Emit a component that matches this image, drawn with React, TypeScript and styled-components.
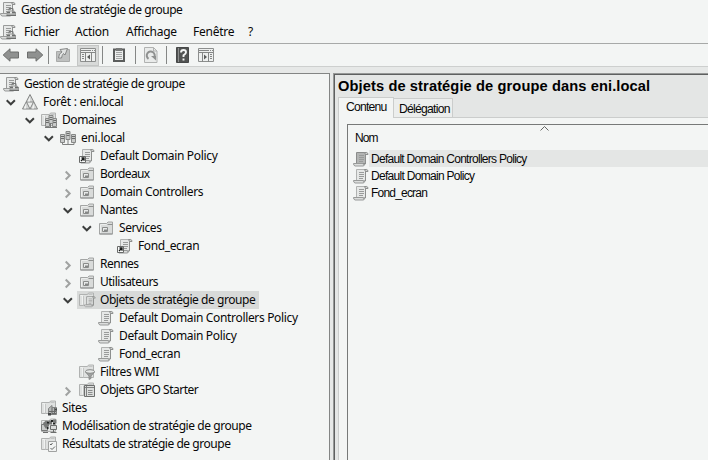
import React from "react";
import styled, { createGlobalStyle } from "styled-components";

const Global = createGlobalStyle`
  * { box-sizing: border-box; }
  body { margin: 0; overflow: hidden; background: #f3f5f4; }
`;

const Window = styled.div`
  width: 708px;
  height: 460px;
  display: flex;
  flex-direction: column;
  background: #f3f5f4;
  color: #080808;
  font: 12px "Noto Sans", sans-serif;
  overflow: hidden;
`;
const TitleBar = styled.header`
  height: 20px;
  display: flex;
  align-items: center;
  gap: 5px;
  svg { margin-top: -2px; }
`;
const MenuBar = styled.nav`
  height: 23px;
  display: flex;
  align-items: center;
  svg { margin-right: 8px; }
`;
const MenuItem = styled.span<{ $width: number }>`
  width: ${(p) => p.$width}px;
  white-space: nowrap;
  letter-spacing: -0.25px;
`;
const Toolbar = styled.div`
  height: 24px;
  flex: none;
  display: flex;
  align-items: center;
  border-top: 1px solid #a7a9a8;
  border-bottom: 1px solid #cdcfce;
`;
const ToolButton = styled.span<{ $width: number; $active?: boolean }>`
  width: ${(p) => p.$width}px;
  height: 21px;
  flex: none;
  display: flex;
  align-items: center;
  justify-content: center;
  background: ${(p) => (p.$active ? "#d8dad9" : "transparent")};
  border: ${(p) => (p.$active ? "1px solid #c4c6c5" : "0")};
  margin-right: ${(p) => (p.$active ? 3 : 0)}px;
  svg { flex: none; }
`;
const Separator = styled.span`
  width: 1px;
  height: 18px;
  background: #858786;
`;
const Body = styled.main`
  flex: 1;
  min-height: 0;
  display: flex;
  padding-top: 6px;
  gap: 3px;
  background: #e6e8e7;
`;
const TreePane = styled.section`
  width: 330px;
  flex: none;
  padding-top: 1px;
  border-top: 1px solid #838584;
  border-right: 1px solid #838584;
  background: #f3f5f4;
`;
const TreeRow = styled.div<{ $depth: number }>`
  height: 18px;
  padding-left: ${(p) => (p.$depth ? p.$depth * 19 - 16 : 3)}px;
  display: flex;
  align-items: center;
`;
const ChevronBox = styled.span`
  width: 19px;
  height: 18px;
  flex: none;
  svg { display: block; }
`;
const TreeItem = styled.span<{ $selected?: boolean }>`
  height: 18px;
  display: flex;
  align-items: center;
  gap: 5px;
  margin-left: -2px;
  padding: 0 4px 0 2px;
  background: ${(p) => (p.$selected ? "#d8dad9" : "transparent")};
`;
const TreeLabel = styled.span<{ $track: number }>`
  white-space: nowrap;
  line-height: 18px;
  letter-spacing: ${(p) => p.$track}px;
`;
const DetailPane = styled.section`
  flex: 1;
  min-width: 0;
  display: flex;
  flex-direction: column;
  border-top: 1px solid #969897;
  border-left: 1px solid #969897;
  font-family: "Liberation Sans", sans-serif;
`;
const DetailInner = styled.div`
  flex: 1;
  display: flex;
  flex-direction: column;
  padding-left: 3px;
  border-top: 1px solid #5e6060;
  border-left: 1px solid #5e6060;
  background: #e4e6e5;
`;
const Heading = styled.h1`
  margin: 0;
  height: 22px;
  font-size: 14.67px;
  line-height: 22px;
  letter-spacing: 0.1px;
  white-space: nowrap;
  color: #000;
`;
const Tabs = styled.div`
  height: 21px;
  display: flex;
  align-items: flex-end;
  border-bottom: 1px solid #cbcdcc;
`;
const Tab = styled.span<{ $width: number; $active?: boolean }>`
  width: ${(p) => p.$width}px;
  height: ${(p) => (p.$active ? 21 : 19)}px;
  margin-bottom: ${(p) => (p.$active ? -1 : 0)}px;
  padding-left: ${(p) => (p.$active ? 7 : 5)}px;
  border: 1px solid #cbcdcc;
  border-bottom: 0;
  border-left-width: ${(p) => (p.$active ? 1 : 0)}px;
  background: ${(p) => (p.$active ? "#f3f5f4" : "#eceeed")};
  line-height: ${(p) => (p.$active ? 18 : 20)}px;
  letter-spacing: ${(p) => (p.$active ? -0.8 : -0.75)}px;
  font-size: 12.2px;
`;
const TabPage = styled.div`
  flex: 1;
  display: flex;
  padding: 6px 0 0 8px;
  border-left: 1px solid #cbcdcc;
  background: #f3f5f4;
`;
const List = styled.div`
  flex: 1;
  border-top: 1px solid #777978;
  border-left: 1px solid #777978;
`;
const ListHeader = styled.div`
  height: 25px;
  display: flex;
  padding: 0 0 0 7px;
  line-height: 27px;
  letter-spacing: -0.9px;
`;
const NameHeading = styled.span`
  width: 185px;
`;
const ListRow = styled.div`
  height: 17px;
  display: flex;
  align-items: center;
  padding-left: 5px;
`;
const ListLabel = styled.span<{ $track: number; $highlight?: boolean }>`
  flex: 1;
  height: 17px;
  padding-left: 2px;
  line-height: 18px;
  letter-spacing: ${(p) => p.$track}px;
  white-space: nowrap;
  background: ${(p) => (p.$highlight ? "#e4e6e5" : "transparent")};
`;
const Glyph = styled.svg`
  width: 16px;
  height: 16px;
  flex: none;
  overflow: visible;
`;

const Scroll = ({ fill = "#e6e8e7", edge = "#b0b2b1" }: { fill?: string; edge?: string }) => (
  <g>
    <path d="M3.5 1.5h9v11H3.5z" fill={fill} stroke={edge} />
    <path d="M11.5 1.5h2.2q1.3.3 1.3 2h-2.500z" fill="#d0d2d1" stroke="#8d8f8e" />
    <path d="M12.500 3.500V13" stroke="#8d8f8e" />
    <path d="M.5 12.500h9.500q0 2 2 1-1 1.500-2 1.500H2q-1.500-.5-1.500-2.500z" fill="#dcdedd" stroke="#989a99" />
    <path d="M6 4.500h5M6 6.500h5M6 8.500h5M6 10.500h4" stroke="#999b9a" />
  </g>
);
const Folder = () => (
  <g>
    <path d="M.5 2.500H8.500l1-1.500H14.500v12.500H.5z" fill="#dfe1e0" stroke="#b0b2b1" />
    <path d="M4.500 4v9.500M9.500 2.500h4" fill="none" stroke="#c3c5c4" />
    <path d="M1.500 3.500h2v9" fill="none" stroke="#f0f2f1" />
  </g>
);
const Server = ({ x, y }: { x: number; y: number }) => (
  <g transform={`translate(${x} ${y})`}>
    <path d="M.5.5h4v8h-4z" fill="#c9cbca" stroke="#868887" />
    <path d="M1 2.500h3M1 4.500h3" stroke="#6a6c6b" />
  </g>
);

type IconName = "console" | "forest" | "domains" | "domain" | "link" | "ou" | "objects" | "gpo" | "gpoDark" | "wmi" | "starter" | "sites" | "model" | "results";

const Icon = ({ name }: { name: IconName }) => (
  <Glyph viewBox="0 0 16 16">
    {name === "console" && (
      <g>
        <Scroll edge="#999b9a" />
        <path d="M9 9V7.500h4V10" fill="none" stroke="#777978" />
        <path d="M8 9.500h6l2 2v3.500H6.500v-3.500z" fill="#999b9a" />
        <path d="M7 11.500h8.500M6.500 14.500h9.500" stroke="#6c6e6d" />
        <path d="M7.500 13h7.500" stroke="#b7b9b8" />
        <path d="M10 10.500h2v2h-2z" fill="#e5e7e6" />
      </g>
    )}
    {name === "forest" && (
      <g strokeLinejoin="round">
        <path d="M8 .5.5 15h15z" fill="#d4d6d5" stroke="#858786" />
        <path d="M4.500 8h7L8 15z" fill="#eceeed" stroke="#858786" />
        <path d="M8 2.500v5H5.500zM4 9.500v5H1.800zM12 9.500v5H9.800z" fill="#f0f2f1" />
      </g>
    )}
    {name === "domains" && <g><Folder /><Server x={4} y={6} /><Server x={11} y={6} /><Server x={7.500} y={3} /><path d="M4 15.500h12M9.500 11v4" stroke="#777978" /></g>}
    {name === "domain" && <g><Server x={0} y={4} /><Server x={11} y={4} /><Server x={5.500} y={1} /><path d="M2.500 12.500v2H14v-2M8 9.500V15" fill="none" stroke="#808281" /></g>}
    {name === "link" && <g><Scroll /><path d="M.5 8.500h6v6h-6z" fill="#f8faf9" stroke="#686a69" /><path d="m2 13 3-3M2.500 10H5v2.700" fill="none" stroke="#171918" strokeWidth="1.3" /></g>}
    {name === "ou" && (
      <g>
        <path d="M1.500 3.500H8.500l1.500-1.500h4.500v12h-13z" fill="#d9dbda" stroke="#a3a5a4" />
        <path d="M9.500 4.500h5" stroke="#8f9190" />
        <path d="M2.500 4.500h6M2.500 5v8" stroke="#eceeed" />
        <path d="M4.500 7.500h5v4h-5z" fill="#e8eae9" stroke="#8a8c8b" />
        <path d="M6 9.500h3v2H6z" fill="#858786" />
        <path d="M1.500 14h13" stroke="#939594" />
      </g>
    )}
    {name === "objects" && <g><Folder /><g transform="translate(5 3.500) scale(.75)"><Scroll edge="#8a8c8b" /></g></g>}
    {(name === "gpo" || name === "gpoDark") && <Scroll fill={name === "gpoDark" ? "#b2b4b3" : "#e6e8e7"} edge={name === "gpoDark" ? "#8a8c8b" : "#b0b2b1"} />}
    {name === "wmi" && <g><Folder /><path d="M6.500 8 10 12v3.500l2-1V12l3.500-4z" fill="#9ea09f" stroke="#858786" strokeWidth=".8" /><ellipse cx="11" cy="7.500" rx="4.500" ry="1.800" fill="#e6e8e7" stroke="#858786" /></g>}
    {name === "starter" && <g><Folder /><path d="M5.500 3.500h10v11h-10z" fill="#dcdedd" stroke="#6c6e6d" /><path d="M7.500 4v10.500M6 5.500h9" stroke="#808281" /><path d="M9 8.500h4.500M9 10.500h4.500M9 12.500h4.500" stroke="#8a8c8b" /></g>}
    {name === "sites" && <g><Folder /><path d="M7.500 8.500 11 5.500v9H7.500zM11 7.500h4.500v7H11z" fill="#b7b9b8" stroke="#808281" /><path d="M8 11.500h7M11 13.500h4M13.500 8v6" stroke="#676968" /><path d="M7 13h3v2.500H7zM14 8.500h2v2h-2z" fill="#464848" /></g>}
    {name === "model" && (
      <g>
        <Folder />
        <path d="M.5 6.500h6v6h-6z" fill="#c9cbca" stroke="#777978" />
        <path d="M2 5 5 2.500l3 2V8L5 11 3 8zM8 2.500h3v4H8zM12 1.500h3.500v4H12z" fill="#777978" />
        <path d="M6 3.500h2v2H6zM10 2h2v2h-2zM12 5h2v1.500h-2zM6 9h1.500v2H6z" fill="#222423" />
        <path d="M9.500 7.500h6v4h-6z" fill="#d9dbda" stroke="#6c6e6d" />
        <path d="M12.500 12v2M9.500 14.500h6M2 14.500h5" stroke="#6c6e6d" />
      </g>
    )}
    {name === "results" && <g><Folder /><path d="M7.500 5.500h8v10h-8z" fill="#f1f3f2" stroke="#a0a2a1" /><path d="m9 8 1 1 1.500-2m-2 5 1.500 1.500 3-3" fill="none" stroke="#626463" /></g>}
  </Glyph>
);

const Chevron = ({ open }: { open: boolean }) => (
  <svg width="16" height="18" viewBox="0 0 16 18">
    <path d={open ? "m3.700 7.300 4.100 4 4.100-4" : "m5.700 6.500 4 4-4 4"} fill="none" stroke={open ? "#3c3e3d" : "#a0a2a1"} strokeWidth="2" />
  </svg>
);

type TreeNode = { label: string; depth: number; icon: IconName; open?: boolean; selected?: boolean; track: number };
const nodes: TreeNode[] = [
  { label: "Gestion de stratégie de groupe", depth: 0, icon: "console", track: -0.47 },
  { label: "Forêt : eni.local", depth: 1, icon: "forest", open: true, track: -0.28 },
  { label: "Domaines", depth: 2, icon: "domains", open: true, track: -0.4 },
  { label: "eni.local", depth: 3, icon: "domain", open: true, track: -0.28 },
  { label: "Default Domain Policy", depth: 4, icon: "link", track: -0.34 },
  { label: "Bordeaux", depth: 4, icon: "ou", open: false, track: -0.6 },
  { label: "Domain Controllers", depth: 4, icon: "ou", open: false, track: -0.37 },
  { label: "Nantes", depth: 4, icon: "ou", open: true, track: -0.4 },
  { label: "Services", depth: 5, icon: "ou", open: true, track: -0.4 },
  { label: "Fond_ecran", depth: 6, icon: "link", track: -0.38 },
  { label: "Rennes", depth: 4, icon: "ou", open: false, track: -0.5 },
  { label: "Utilisateurs", depth: 4, icon: "ou", open: false, track: -0.5 },
  { label: "Objets de stratégie de groupe", depth: 4, icon: "objects", open: true, selected: true, track: -0.45 },
  { label: "Default Domain Controllers Policy", depth: 5, icon: "gpo", track: -0.34 },
  { label: "Default Domain Policy", depth: 5, icon: "gpo", track: -0.34 },
  { label: "Fond_ecran", depth: 5, icon: "gpo", track: -0.38 },
  { label: "Filtres WMI", depth: 4, icon: "wmi", track: -0.38 },
  { label: "Objets GPO Starter", depth: 4, icon: "starter", open: false, track: -0.48 },
  { label: "Sites", depth: 2, icon: "sites", track: -0.3 },
  { label: "Modélisation de stratégie de groupe", depth: 2, icon: "model", track: -0.43 },
  { label: "Résultats de stratégie de groupe", depth: 2, icon: "results", track: -0.46 },
];

const Arrow = ({ right = false }: { right?: boolean }) => (
  <svg width="18" height="16" viewBox="0 0 18 16">
    <path transform={right ? "translate(18 0) scale(-1 1)" : undefined} d="M1.200 8 8 1.800V5h8.500v6H8v3.200z" fill="#8f9190" stroke="#6c6e6d" strokeLinejoin="round" />
  </svg>
);
const Panel = ({ right = false }: { right?: boolean }) => (
  <svg width="16" height="14" viewBox="0 0 16 14">
    <path d="M.5.5h15v13H.5z" fill="#eef0ef" stroke="#8d8f8e" />
    <path d="M1 2.500h10M12 2.500h1M14 2.500h1M1 4.500h14" stroke="#858786" />
    <g transform={right ? "translate(16 0) scale(-1 1)" : undefined}>
      <path d="M5.500 5v9M11.500 5v9" stroke="#858786" />
      <path d="M2 6.500h2M2 8.500h2M2 10.500h2" stroke="#858786" />
      <path d="m10 6.500-3 2.500 3 2.500z" fill="#5b5d5c" />
    </g>
  </svg>
);

export default function App() {
  return (
    <>
      <Global />
      <Window>
        <TitleBar><Icon name="console" /><TreeLabel $track={-0.45}>Gestion de stratégie de groupe</TreeLabel></TitleBar>
        <MenuBar>
          <Icon name="console" />
          <MenuItem $width={51}>Fichier</MenuItem>
          <MenuItem $width={51}>Action</MenuItem>
          <MenuItem $width={67}>Affichage</MenuItem>
          <MenuItem $width={55}>Fenêtre</MenuItem>
          <MenuItem $width={10}>?</MenuItem>
        </MenuBar>
        <Toolbar>
          <ToolButton $width={22}><Arrow /></ToolButton>
          <ToolButton $width={26}><Arrow right /></ToolButton>
          <Separator />
          <ToolButton $width={28}>
            <svg width="16" height="16" viewBox="0 0 16 16">
              <path d="M1.500 4.500h5l1-2h7v12h-13z" fill="#bfc1c0" stroke="#a8aaa9" />
              <path d="m3.500 11 1-4 2.500-2-2-2.500L12.500 1.500 10 8 8.500 6.500Q7 8 6.500 11z" fill="#e2e4e3" stroke="#858786" />
            </svg>
          </ToolButton>
          <ToolButton $width={22} $active><Panel /></ToolButton>
          <Separator />
          <ToolButton $width={32}>
            <svg width="14" height="16" viewBox="0 0 14 16">
              <path d="M2 2.500h10V14H2z" fill="#eceeed" stroke="#5b5d5c" strokeWidth="2" />
              <path d="M4 1h6v3H4z" fill="#777978" />
              <path d="M4 5.500h6M4 7.500h6M4 9.500h6M4 11.500h6" stroke="#a3a5a4" />
            </svg>
          </ToolButton>
          <Separator />
          <ToolButton $width={30}>
            <svg width="14" height="16" viewBox="0 0 14 16">
              <path d="M.5.500h9l3.500 3.500v11.500H.5z" fill="#e9ebea" stroke="#b0b2b1" />
              <path d="M9.500.5V4H13" fill="none" stroke="#b0b2b1" />
              <path d="M4.500 11.800a4 4 0 1 1 5.500-1" fill="none" stroke="#8f9190" strokeWidth="2" />
              <path d="M7 9h5v4.500z" fill="#8f9190" />
            </svg>
          </ToolButton>
          <Separator />
          <ToolButton $width={31}>
            <svg width="14" height="16" viewBox="0 0 14 16">
              <path d="M.5.5h12v15H.5z" fill="#515352" stroke="#464848" />
              <path d="M2.500 1v14" stroke="#8d8f8e" />
              <path d="M5 5.500q0-2.500 2.500-2.500T10 5.300Q10 7 7.500 8.300V10M7.500 11.500v2" fill="none" stroke="#f3f5f4" strokeWidth="1.900" />
            </svg>
          </ToolButton>
          <ToolButton $width={16}><Panel right /></ToolButton>
        </Toolbar>
        <Body>
          <TreePane>
            {nodes.map((n, i) => (
              <TreeRow key={i} $depth={n.depth}>
                {n.depth > 0 && <ChevronBox>{n.open !== undefined && <Chevron open={n.open} />}</ChevronBox>}
                <TreeItem $selected={n.selected}><Icon name={n.icon} /><TreeLabel $track={n.track}>{n.label}</TreeLabel></TreeItem>
              </TreeRow>
            ))}
          </TreePane>
          <DetailPane>
            <DetailInner>
              <Heading>Objets de stratégie de groupe dans eni.local</Heading>
              <Tabs><Tab $width={56} $active>Contenu</Tab><Tab $width={59}>Délégation</Tab></Tabs>
              <TabPage>
                <List>
                  <ListHeader>
                    <NameHeading>Nom</NameHeading>
                    <svg width="9" height="7" viewBox="0 0 9 7"><path d="m.5 5.500 4-4 4 4" fill="none" stroke="#646665" /></svg>
                  </ListHeader>
                  <ListRow><Icon name="gpoDark" /><ListLabel $highlight $track={-0.72}>Default Domain Controllers Policy</ListLabel></ListRow>
                  <ListRow><Icon name="gpo" /><ListLabel $track={-0.7}>Default Domain Policy</ListLabel></ListRow>
                  <ListRow><Icon name="gpo" /><ListLabel $track={-0.8}>Fond_ecran</ListLabel></ListRow>
                </List>
              </TabPage>
            </DetailInner>
          </DetailPane>
        </Body>
      </Window>
    </>
  );
}
